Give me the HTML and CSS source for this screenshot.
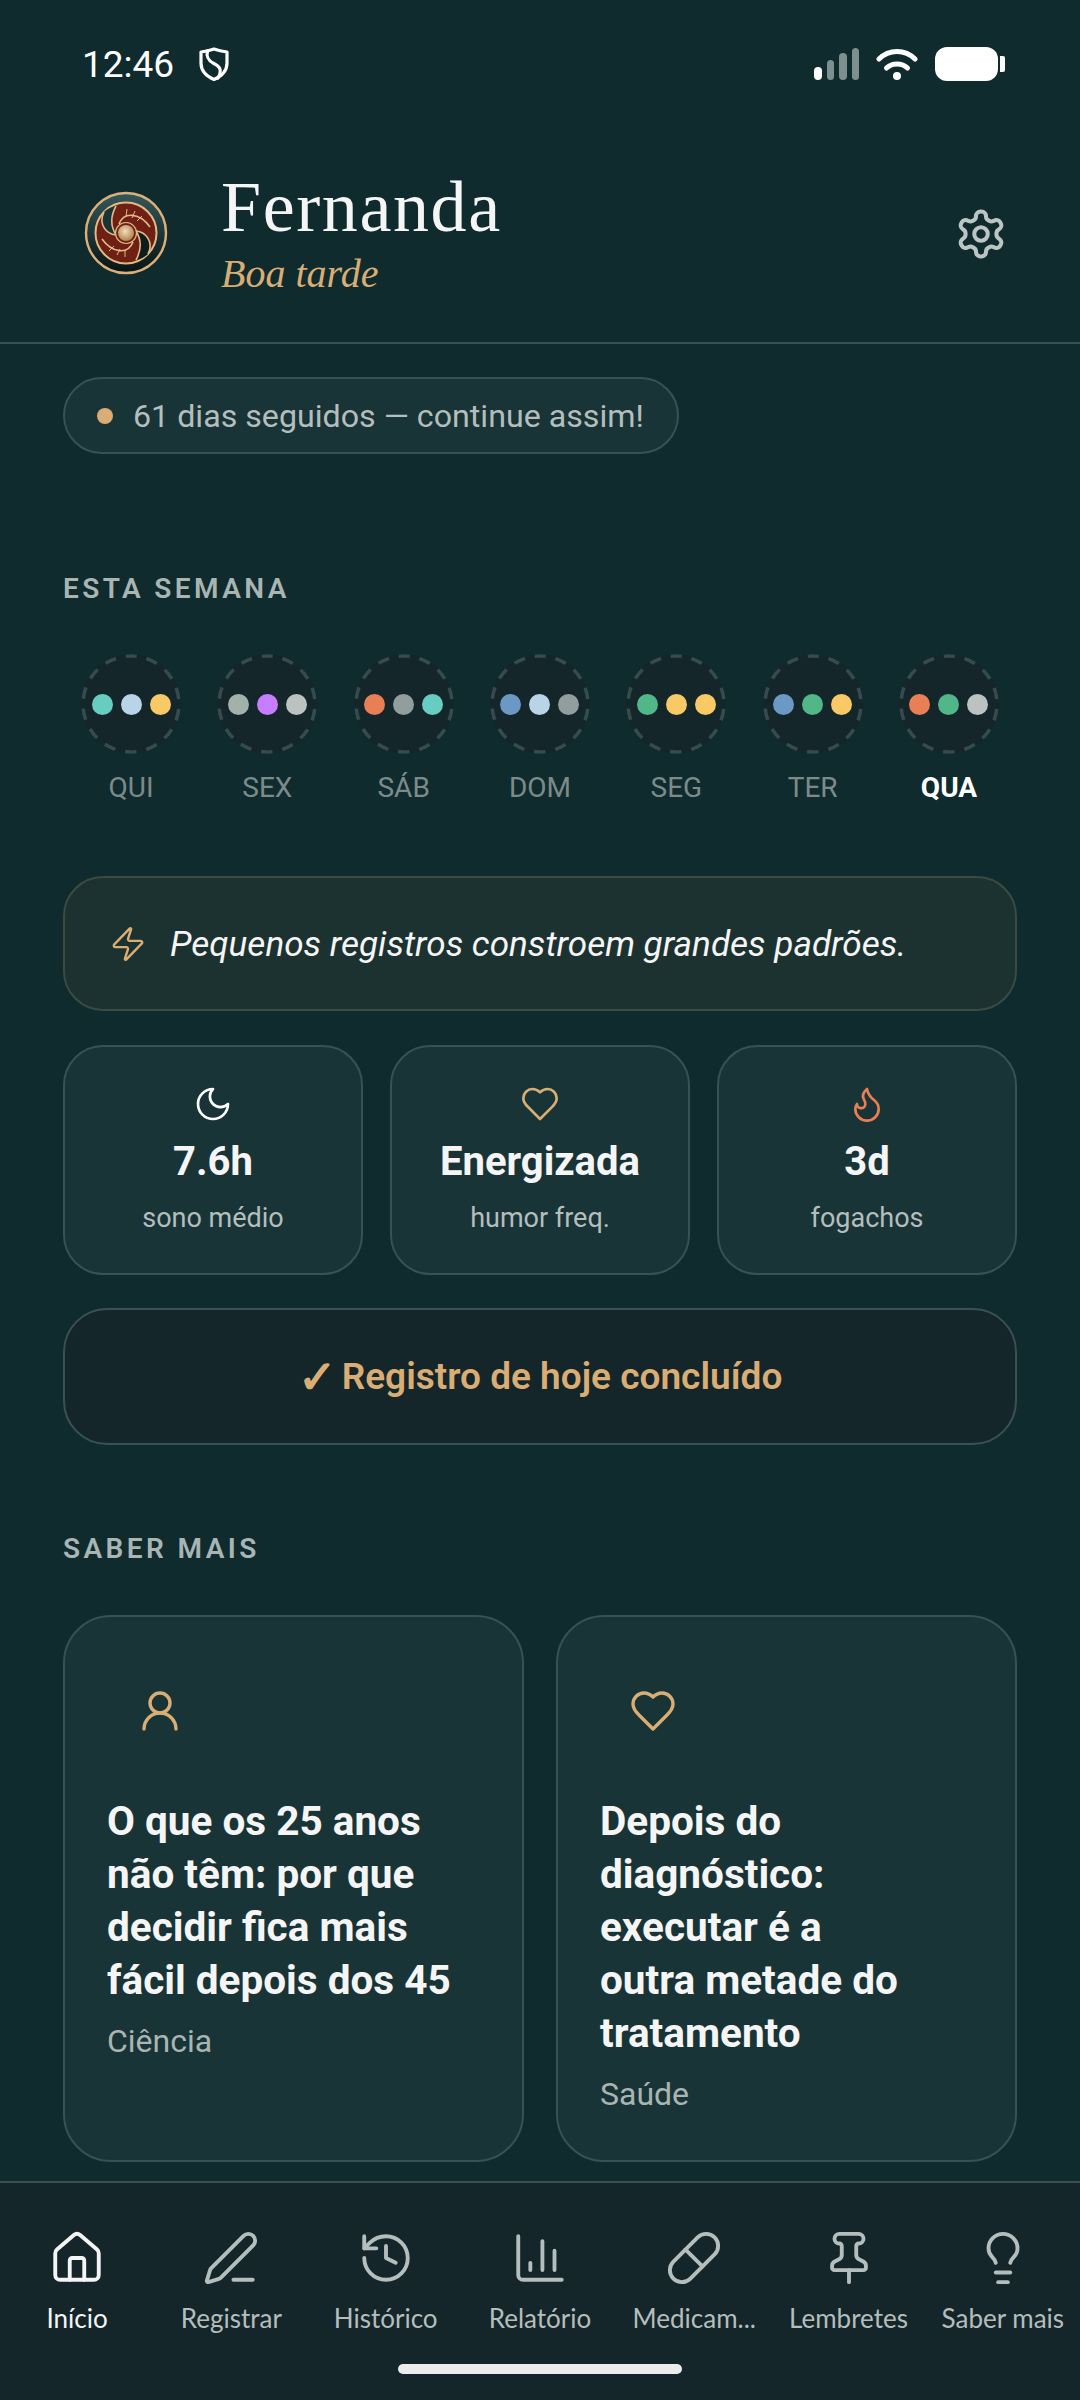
FILE: index.html
```html
<!DOCTYPE html>
<html lang="pt-BR">
  <head>
    <meta charset="UTF-8" />
    <meta name="viewport" content="width=device-width, initial-scale=1.0" />
    <title>Início</title>
    <link rel="stylesheet" href="styles.css">
  </head>

  <body>
    <div class="screen">
      <div class="status-bar">
        <div class="status-left">
          <span class="time">12:46</span>
          <svg class="shield" viewBox="0 0 30 34" fill="none" stroke="#fff" stroke-width="3.2" stroke-linejoin="round" stroke-linecap="round">
            <path d="M15 2 C19 3.5 24 4.5 28 5 V16 C28 24 22 29.5 15 32.5 C8 29.5 2 24 2 16 V5 C6 4.5 11 3.5 15 2Z"/>
            <path d="M8.5 4 C7 10 9 13 14 16 C20 19 24 22 19 31"/>
          </svg>
        </div>
        <div class="status-right">
          <div class="signal">
            <span class="bar bar-1 bar-on"></span>
            <span class="bar bar-2"></span>
            <span class="bar bar-3"></span>
            <span class="bar bar-4"></span>
          </div>
          <svg class="wifi" viewBox="0 0 42 32" fill="none" stroke="#fff" stroke-width="5" stroke-linecap="round">
            <path d="M3 11 C13 1 29 1 39 11"/>
            <path d="M10.5 20 C16 14.5 26 14.5 31.5 20"/>
            <circle cx="21" cy="28" r="4" fill="#fff" stroke="none"/>
          </svg>
          <div class="battery"><span class="battery-cap"></span></div>
        </div>
      </div>

      <header class="top-header">
        <svg class="avatar" viewBox="0 0 84 84">
          <defs>
            <radialGradient id="goldDisc" cx="45%" cy="40%" r="70%">
              <stop offset="0" stop-color="#f3dfba"/>
              <stop offset="1" stop-color="#a5713f"/>
            </radialGradient>
            <linearGradient id="band" x1="0" y1="0" x2="0" y2="1">
              <stop offset="0" stop-color="#34585a"/>
              <stop offset="1" stop-color="#081415"/>
            </linearGradient>
          </defs>
          <circle cx="42" cy="42" r="40" fill="url(#band)" stroke="#dcb07a" stroke-width="2.4"/>
          <circle cx="42" cy="42" r="30.5" fill="#6e2015" stroke="#e0b984" stroke-width="2"/>
          <path d="M20 21 C14 33 22 43 32 44 C27 36 26 26 32 15 C27 16 23 18 20 21Z" fill="#1a3436"/>
          <path d="M64 63 C70 51 62 41 52 40 C57 48 58 58 52 69 C57 68 61 66 64 63Z" fill="#0d1c1d"/>
          <g fill="none" stroke="#e0b984" stroke-width="1.6">
            <path d="M20 21 C14 33 22 43 32 44"/>
            <path d="M32 15 C26 26 27 36 32 44"/>
            <path d="M64 63 C70 51 62 41 52 40"/>
            <path d="M52 69 C58 58 57 48 52 40"/>
            <path d="M35 33 C40 20 56 22 66 36"/>
            <path d="M49 51 C44 64 28 62 18 48"/>
          </g>
          <g stroke="#e0b984" stroke-width="1">
            <path d="M42 26 L43 18"/>
            <path d="M48 27 L51 20"/>
            <path d="M53 30 L58 25"/>
            <path d="M36 58 L33 64"/>
            <path d="M30 55 L25 60"/>
            <path d="M41 59 L41 66"/>
          </g>
          <circle cx="42" cy="42" r="10.5" fill="#6e2015" stroke="#e0b984" stroke-width="1.2"/>
          <circle cx="42" cy="42" r="8" fill="url(#goldDisc)"/>
        </svg>
        <div class="greeting">
          <div class="user-name">Fernanda</div>
          <div class="time-of-day">Boa tarde</div>
        </div>
        <svg class="gear" viewBox="0 0 24 24" fill="none" stroke="#bcc5c4" stroke-width="1.8" stroke-linecap="round" stroke-linejoin="round">
          <path d="M12.22 2h-.44a2 2 0 0 0-2 2v.18a2 2 0 0 1-1 1.73l-.43.25a2 2 0 0 1-2 0l-.15-.08a2 2 0 0 0-2.73.73l-.22.38a2 2 0 0 0 .73 2.73l.15.1a2 2 0 0 1 1 1.72v.51a2 2 0 0 1-1 1.74l-.15.09a2 2 0 0 0-.73 2.73l.22.38a2 2 0 0 0 2.73.73l.15-.08a2 2 0 0 1 2 0l.43.25a2 2 0 0 1 1 1.73V20a2 2 0 0 0 2 2h.44a2 2 0 0 0 2-2v-.18a2 2 0 0 1 1-1.73l.43-.25a2 2 0 0 1 2 0l.15.08a2 2 0 0 0 2.73-.73l.22-.39a2 2 0 0 0-.73-2.73l-.15-.08a2 2 0 0 1-1-1.74v-.5a2 2 0 0 1 1-1.74l.15-.09a2 2 0 0 0 .73-2.73l-.22-.38a2 2 0 0 0-2.73-.73l-.15.08a2 2 0 0 1-2 0l-.43-.25a2 2 0 0 1-1-1.73V4a2 2 0 0 0-2-2z"/>
          <circle cx="12" cy="12" r="3"/>
        </svg>
      </header>

      <main class="content">
        <div class="streak-pill">
          <span class="streak-dot"></span>
          <span>61 dias seguidos — continue assim!</span>
        </div>

        <h2 class="section-title week-title">ESTA SEMANA</h2>
        <div class="week-strip">
          <div class="day">
            <div class="day-circle"><span class="dot teal"></span><span class="dot sky"></span><span class="dot yellow"></span></div>
            <span class="day-label">QUI</span>
          </div>
          <div class="day">
            <div class="day-circle"><span class="dot sage"></span><span class="dot purple"></span><span class="dot silver"></span></div>
            <span class="day-label">SEX</span>
          </div>
          <div class="day">
            <div class="day-circle"><span class="dot orange"></span><span class="dot grey"></span><span class="dot teal"></span></div>
            <span class="day-label">SÁB</span>
          </div>
          <div class="day">
            <div class="day-circle"><span class="dot blue"></span><span class="dot sky"></span><span class="dot grey"></span></div>
            <span class="day-label">DOM</span>
          </div>
          <div class="day">
            <div class="day-circle"><span class="dot green"></span><span class="dot yellow"></span><span class="dot yellow"></span></div>
            <span class="day-label">SEG</span>
          </div>
          <div class="day">
            <div class="day-circle"><span class="dot blue"></span><span class="dot green"></span><span class="dot yellow"></span></div>
            <span class="day-label">TER</span>
          </div>
          <div class="day">
            <div class="day-circle"><span class="dot orange"></span><span class="dot green"></span><span class="dot silver"></span></div>
            <span class="day-label day-today">QUA</span>
          </div>
        </div>

        <div class="quote-card">
          <svg class="quote-icon" viewBox="0 0 24 24" fill="none" stroke="#d9ad74" stroke-width="1.5" stroke-linecap="round" stroke-linejoin="round">
            <path d="M4 14a1 1 0 0 1-.78-1.63l9.9-10.2a.5.5 0 0 1 .86.46l-1.92 6.02A1 1 0 0 0 13 10h7a1 1 0 0 1 .78 1.63l-9.9 10.2a.5.5 0 0 1-.86-.46l1.92-6.02A1 1 0 0 0 11 14z"/>
          </svg>
          <span>Pequenos registros constroem grandes padrões.</span>
        </div>

        <div class="stats">
          <div class="stat-card">
            <svg class="stat-icon" viewBox="0 0 24 24" fill="none" stroke="#fff" stroke-width="1.6" stroke-linecap="round" stroke-linejoin="round">
              <path d="M12 3a6 6 0 0 0 9 9 9 9 0 1 1-9-9Z"/>
            </svg>
            <div class="stat-value">7.6h</div>
            <div class="stat-label">sono médio</div>
          </div>
          <div class="stat-card">
            <svg class="stat-icon" viewBox="0 0 24 24" fill="none" stroke="#d9ad74" stroke-width="1.6" stroke-linecap="round" stroke-linejoin="round">
              <path d="M19 14c1.49-1.46 3-3.21 3-5.5A5.5 5.5 0 0 0 16.5 3c-1.76 0-3 .5-4.5 2-1.5-1.5-2.74-2-4.5-2A5.5 5.5 0 0 0 2 8.5c0 2.3 1.5 4.05 3 5.5l7 7Z"/>
            </svg>
            <div class="stat-value">Energizada</div>
            <div class="stat-label">humor freq.</div>
          </div>
          <div class="stat-card">
            <svg class="stat-icon" viewBox="0 0 24 24" fill="none" stroke="#e97f55" stroke-width="1.6" stroke-linecap="round" stroke-linejoin="round">
              <path d="M8.5 14.5A2.5 2.5 0 0 0 11 12c0-1.38-.5-2-1-3-1.072-2.143-.224-4.054 2-6 .5 2.5 2 4.9 4 6.5 2 1.6 3 3.5 3 5.5a7 7 0 1 1-14 0c0-1.153.433-2.294 1-3a2.5 2.5 0 0 0 2.5 2.5z"/>
            </svg>
            <div class="stat-value">3d</div>
            <div class="stat-label">fogachos</div>
          </div>
        </div>

        <div class="done-button"><span class="done-check">✓</span> Registro de hoje concluído</div>

        <h2 class="section-title more-title">SABER MAIS</h2>
        <div class="articles">
          <div class="article-card">
            <svg class="article-icon" viewBox="0 0 24 24" fill="none" stroke="#d9ad74" stroke-width="1.7" stroke-linecap="round" stroke-linejoin="round">
              <circle cx="12" cy="8" r="5"/>
              <path d="M20 21a8 8 0 0 0-16 0"/>
            </svg>
            <div class="article-title">O que os 25 anos não têm: por que decidir fica mais fácil depois dos 45</div>
            <div class="article-tag">Ciência</div>
          </div>
          <div class="article-card">
            <svg class="article-icon" viewBox="0 0 24 24" fill="none" stroke="#d9ad74" stroke-width="1.7" stroke-linecap="round" stroke-linejoin="round">
              <path d="M19 14c1.49-1.46 3-3.21 3-5.5A5.5 5.5 0 0 0 16.5 3c-1.76 0-3 .5-4.5 2-1.5-1.5-2.74-2-4.5-2A5.5 5.5 0 0 0 2 8.5c0 2.3 1.5 4.05 3 5.5l7 7Z"/>
            </svg>
            <div class="article-title">Depois do diagnóstico: executar é a<br>outra metade do tratamento</div>
            <div class="article-tag">Saúde</div>
          </div>
        </div>
      </main>

      <nav class="bottom-nav">
        <div class="nav-items">
          <div class="nav-item nav-active">
            <svg class="nav-icon" viewBox="0 0 24 24"><path d="M15 21v-8a1 1 0 0 0-1-1h-4a1 1 0 0 0-1 1v8"/><path d="M3 10a2 2 0 0 1 .709-1.528l7-5.999a2 2 0 0 1 2.582 0l7 5.999A2 2 0 0 1 21 10v9a2 2 0 0 1-2 2H5a2 2 0 0 1-2-2z"/></svg>
            <span>Início</span>
          </div>
          <div class="nav-item">
            <svg class="nav-icon" viewBox="0 0 24 24"><path d="M13 21h8"/><path d="M21.174 6.812a1 1 0 0 0-3.986-3.987L3.842 16.174a2 2 0 0 0-.5.83l-1.321 4.352a.5.5 0 0 0 .623.622l4.353-1.32a2 2 0 0 0 .83-.497z"/></svg>
            <span>Registrar</span>
          </div>
          <div class="nav-item">
            <svg class="nav-icon" viewBox="0 0 24 24"><path d="M3 12a9 9 0 1 0 9-9 9.75 9.75 0 0 0-6.74 2.74L3 8"/><path d="M3 3v5h5"/><path d="M12 7v5l4 2"/></svg>
            <span>Histórico</span>
          </div>
          <div class="nav-item">
            <svg class="nav-icon" viewBox="0 0 24 24"><path d="M3 3v16a2 2 0 0 0 2 2h16"/><path d="M18 17V9"/><path d="M13 17V5"/><path d="M8 17v-3"/></svg>
            <span>Relatório</span>
          </div>
          <div class="nav-item">
            <svg class="nav-icon" viewBox="0 0 24 24"><path d="m10.5 20.5 10-10a4.95 4.95 0 1 0-7-7l-10 10a4.95 4.95 0 1 0 7 7Z"/><path d="m8.5 8.5 7 7"/></svg>
            <span>Medicam...</span>
          </div>
          <div class="nav-item">
            <svg class="nav-icon" viewBox="0 0 24 24"><path d="M12 17v5"/><path d="M9 10.76a2 2 0 0 1-1.11 1.79l-1.78.9A2 2 0 0 0 5 15.24V16a1 1 0 0 0 1 1h12a1 1 0 0 0 1-1v-.76a2 2 0 0 0-1.11-1.79l-1.78-.9A2 2 0 0 1 15 10.76V7a1 1 0 0 1 1-1 2 2 0 0 0 0-4H8a2 2 0 0 0 0 4 1 1 0 0 1 1 1z"/></svg>
            <span>Lembretes</span>
          </div>
          <div class="nav-item">
            <svg class="nav-icon" viewBox="0 0 24 24"><path d="M15 14c.2-1 .7-1.7 1.5-2.5 1-.9 1.5-2.2 1.5-3.5A6 6 0 0 0 6 8c0 1 .2 2.2 1.5 3.5.7.7 1.3 1.5 1.5 2.5"/><path d="M9 18h6"/><path d="M10 22h4"/></svg>
            <span>Saber mais</span>
          </div>
        </div>
        <div class="home-indicator"></div>
      </nav>
    </div>
  </body>
</html>
```

FILE: styles.css
```css
body {
  margin: 0;
  font-family: Roboto, sans-serif;
  background-color: #0f2b2e;
  color: #fff;
}

.screen {
  width: 1080px;
  height: 2400px;
  display: flex;
  flex-direction: column;
  overflow: hidden;
}

/* status bar */
.status-bar {
  height: 124px;
  padding: 4px 82px 0 82px;
  display: flex;
  justify-content: space-between;
  align-items: center;
  box-sizing: border-box;
}

.status-left {
  display: flex;
  align-items: center;
  gap: 25px;
}

.time {
  font-size: 37px;
}

.shield {
  width: 30px;
  height: 34px;
}

.status-right {
  display: flex;
  align-items: center;
  gap: 17px;
}

.signal {
  display: flex;
  align-items: flex-end;
  gap: 5px;
  height: 32px;
}

.bar {
  width: 7.5px;
  border-radius: 4px;
  background-color: #7d8f8e;
}

.bar-on {
  background-color: #fff;
}

.bar-1 { height: 13px; }
.bar-2 { height: 20px; }
.bar-3 { height: 27px; }
.bar-4 { height: 32px; }

.wifi {
  width: 42px;
  height: 32px;
}

.battery {
  width: 63px;
  height: 34px;
  background-color: #fff;
  border-radius: 12px;
  position: relative;
}

.battery-cap {
  position: absolute;
  left: 65px;
  top: 9px;
  width: 5px;
  height: 16px;
  border-radius: 0 2px 2px 0;
  background-color: #fff;
}

/* header */
.top-header {
  height: 220px;
  padding: 0 72px 0 84px;
  display: flex;
  align-items: center;
  box-sizing: border-box;
  border-bottom: 2px solid #3a5154;
}

.avatar {
  width: 84px;
  height: 84px;
  flex: none;
}

.greeting {
  margin-left: 53px;
  padding-top: 2px;
  flex: 1;
}

.user-name {
  font-family: "Liberation Serif", serif;
  font-size: 72px;
  line-height: 76px;
  letter-spacing: 1.6px;
  color: #f5f5f5;
}

.time-of-day {
  margin-top: 4px;
  font-family: "Liberation Serif", serif;
  font-style: italic;
  font-size: 40px;
  line-height: 50px;
  color: #d9ad74;
}

.gear {
  width: 54px;
  height: 54px;
  margin-top: 2px;
}

/* main content */
.content {
  flex: 1;
  padding: 33px 63px 0;
}

.streak-pill {
  display: inline-flex;
  align-items: center;
  gap: 20px;
  height: 77px;
  padding: 0 33px 0 32px;
  box-sizing: border-box;
  border: 2px solid #3a5154;
  border-radius: 40px;
  background-color: #183437;
  font-size: 32.2px;
  color: #b4bebd;
}

.streak-dot {
  width: 16px;
  height: 16px;
  border-radius: 50%;
  background-color: #d9ad74;
}

.section-title {
  margin: 0;
  font-size: 28px;
  font-weight: 600;
  line-height: 30px;
  letter-spacing: 3.4px;
  color: #a9b5b3;
}

.week-title {
  margin-top: 120px;
}

.more-title {
  margin-top: 89px;
}

.week-strip {
  margin-top: 50px;
  padding: 0 18px;
  display: flex;
  justify-content: space-between;
}

.day {
  width: 100px;
  display: flex;
  flex-direction: column;
  align-items: center;
  gap: 19px;
}

.day-circle {
  width: 100px;
  height: 100px;
  border-radius: 50%;
  background-color: #14262a;
  background-image: url("data:image/svg+xml,%3Csvg xmlns='http://www.w3.org/2000/svg' viewBox='0 0 100 100'%3E%3Ccircle cx='50' cy='50' r='48' fill='none' stroke='%23364b4e' stroke-width='3.6' stroke-dasharray='11.5 10.04' stroke-dashoffset='5.75' transform='rotate(-90 50 50)'/%3E%3C/svg%3E");
  display: flex;
  align-items: center;
  justify-content: center;
  gap: 8px;
}

.dot {
  width: 21px;
  height: 21px;
  border-radius: 50%;
}

.teal { background-color: #66cdc0; }
.sky { background-color: #b8d4e6; }
.yellow { background-color: #f9c966; }
.sage { background-color: #a3b1ab; }
.purple { background-color: #c77dff; }
.silver { background-color: #bcc2c2; }
.orange { background-color: #e97f55; }
.grey { background-color: #929e9e; }
.blue { background-color: #6b98c4; }
.green { background-color: #52b788; }

.day-label {
  font-size: 28px;
  line-height: 30px;
  color: #7c8b8a;
}

.day-today {
  font-weight: 700;
  color: #fff;
}

.quote-card {
  margin-top: 73px;
  height: 135px;
  box-sizing: border-box;
  padding: 0 44px;
  display: flex;
  align-items: center;
  gap: 23px;
  border: 2px solid #3c4b42;
  border-radius: 40px;
  background-color: #1c3231;
  font-size: 35.1px;
  font-style: italic;
  color: #f5f5f5;
}

.quote-icon {
  width: 38px;
  height: 38px;
  flex: none;
}

.stats {
  margin-top: 34px;
  display: grid;
  grid-template-columns: repeat(3, 1fr);
  gap: 27px;
}

.stat-card {
  height: 230px;
  box-sizing: border-box;
  padding-top: 37px;
  display: flex;
  flex-direction: column;
  align-items: center;
  border: 2px solid #3a5154;
  border-radius: 40px;
  background-color: #183437;
}

.stat-icon {
  width: 40px;
  height: 40px;
}

.stat-value {
  margin-top: 14px;
  font-size: 40px;
  font-weight: 700;
  line-height: 48px;
  color: #f5f5f5;
}

.stat-label {
  margin-top: 14px;
  font-size: 27px;
  line-height: 36px;
  color: #b4bebd;
}

.done-button {
  margin-top: 33px;
  height: 137px;
  box-sizing: border-box;
  display: flex;
  align-items: center;
  justify-content: center;
  gap: 5px;
  border: 2px solid #3a5154;
  border-radius: 44px;
  background-color: #14262a;
  font-size: 37px;
  font-weight: 600;
  color: #d9ad74;
}

.done-check {
  font-size: 46px;
}

.articles {
  margin-top: 51px;
  display: grid;
  grid-template-columns: 461px 461px;
  justify-content: space-between;
}

.article-card {
  height: 547px;
  box-sizing: border-box;
  padding: 70px 36px 0 42px;
  border: 2px solid #3a5154;
  border-radius: 48px;
  background-color: #183437;
}

.article-icon {
  display: block;
  width: 48px;
  height: 48px;
  margin: 0 0 60px 29px;
}

.article-title {
  font-size: 40.5px;
  font-weight: 700;
  line-height: 53px;
  color: #f5f5f5;
}

.article-tag {
  margin-top: 14px;
  font-size: 32px;
  line-height: 40px;
  color: #a9b5b3;
}

/* bottom nav */
.bottom-nav {
  height: 219px;
  box-sizing: border-box;
  border-top: 2px solid #3a5154;
  background-color: #14262a;
}

.nav-items {
  padding-top: 46px;
  display: grid;
  grid-template-columns: repeat(7, 1fr);
}

.nav-item {
  display: flex;
  flex-direction: column;
  align-items: center;
  gap: 13px;
  font-family: Lato, sans-serif;
  font-size: 26px;
  line-height: 36px;
  white-space: nowrap;
  color: #b4bebd;
}

.nav-active {
  color: #f5f5f5;
}

.nav-icon {
  width: 58px;
  height: 58px;
  fill: none;
  stroke: currentColor;
  stroke-width: 1.6;
  stroke-linecap: round;
  stroke-linejoin: round;
}

.home-indicator {
  width: 284px;
  height: 10px;
  margin: 28px auto 0;
  border-radius: 5px;
  background-color: #ececec;
}
```
